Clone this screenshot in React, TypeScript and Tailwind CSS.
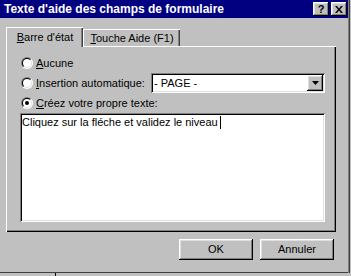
import React from "react";

const raised =
  "shadow-[inset_-1px_-1px_#000,inset_1px_1px_#fff,inset_-2px_-2px_#808080,inset_2px_2px_#dfdfdf]";
const sunken =
  "shadow-[inset_1px_1px_#808080,inset_-1px_-1px_#fff,inset_2px_2px_#000,inset_-2px_-2px_#dfdfdf]";

function Radio({ checked }: { checked?: boolean }) {
  return (
    <svg width="12" height="12" viewBox="0 0 12 12" className="shrink-0">
      <defs>
        <linearGradient id="ro" x1="0" y1="0" x2="1" y2="1">
          <stop offset="0.5" stopColor="#808080" />
          <stop offset="0.5" stopColor="#ffffff" />
        </linearGradient>
        <linearGradient id="ri" x1="0" y1="0" x2="1" y2="1">
          <stop offset="0.5" stopColor="#000000" />
          <stop offset="0.5" stopColor="#dfdfdf" />
        </linearGradient>
      </defs>
      <circle cx="6" cy="6" r="6" fill="url(#ro)" />
      <circle cx="6" cy="6" r="5" fill="url(#ri)" />
      <circle cx="6" cy="6" r="4" fill="#fff" />
      {checked && <circle cx="6" cy="6" r="2" fill="#000" />}
    </svg>
  );
}

export default function App() {
  return (
    <div
      className="relative flex h-[276px] w-[351px] flex-col overflow-hidden bg-[#c0c0c0] text-[11px] text-black"
      style={{ fontFamily: '"Liberation Sans", Arial, sans-serif' }}
    >
      {/* title bar */}
      <div className="flex h-[18px] w-[348px] shrink-0 items-center bg-[#000080] pl-[4px] pr-[1px]">
        <span className="flex-1 text-[12px] font-bold leading-none text-white">
          Texte d'aide des champs de formulaire
        </span>
        <div className={`flex h-[14px] w-[16px] items-center justify-center bg-[#c0c0c0] text-[11px] font-bold leading-none ${raised}`}>
          ?
        </div>
        <div className={`ml-[2px] flex h-[14px] w-[16px] items-center justify-center bg-[#c0c0c0] ${raised}`}>
          <svg width="8" height="7" viewBox="0 0 8 7">
            <path d="M0 0h2l2 2.5L6 0h2L5 3.5 8 7H6L4 4.5 2 7H0l3-3.5z" fill="#000" />
          </svg>
        </div>
      </div>

      {/* tabs */}
      <div className="mt-[9px] flex items-end pl-[6px]">
        <div className="relative z-10 -mb-px flex h-[20px] w-[77px] items-center justify-center border-t border-l border-white bg-[#c0c0c0] shadow-[inset_-1px_0_#404040,inset_-2px_0_#808080]">
          <span>
            <span className="underline">B</span>arre d'état
          </span>
        </div>
        <div className="flex h-[17px] w-[97px] items-center justify-center border-t border-l border-white bg-[#c0c0c0] shadow-[inset_-1px_0_#404040,inset_-2px_0_#808080]">
          <span>
            <span className="underline">T</span>ouche Aide (F1)
          </span>
        </div>
      </div>

      {/* panel */}
      <div className="ml-[6px] flex h-[186px] w-[330px] flex-col pt-[7px] pl-[14px] shadow-[inset_1px_1px_#fff,inset_-1px_-1px_#000,inset_-2px_-2px_#808080]">
        <div className="flex h-[20px] items-center pl-[1px]">
          <Radio />
          <span className="ml-[3px]">
            <span className="underline">A</span>ucune
          </span>
        </div>
        <div className="flex h-[20px] items-center pl-[1px]">
          <Radio />
          <span className="ml-[3px] w-[115px]">
            <span className="underline">I</span>nsertion automatique:
          </span>
          <div className={`flex h-[20px] w-[174px] items-center bg-white pl-[3px] pr-[2px] ${sunken}`}>
            <span className="flex-1">- PAGE -</span>
            <div className={`flex h-[16px] w-[16px] items-center justify-center bg-[#c0c0c0] ${raised}`}>
              <svg width="7" height="4" viewBox="0 0 7 4">
                <path d="M0 0h7L3.5 4z" fill="#000" />
              </svg>
            </div>
          </div>
        </div>
        <div className="flex h-[20px] items-center pl-[1px]">
          <Radio checked />
          <span className="ml-[3px]">
            <span className="underline">C</span>réez votre propre texte:
          </span>
        </div>
        <div className={`h-[109px] w-[305px] bg-white px-[2px] pt-[3px] ${sunken}`}>
          <div className="flex items-center leading-[13px]">
            <span>Cliquez sur la fléche et validez le niveau</span>
            <span className="ml-[2px] h-[13px] w-px bg-black" />
          </div>
        </div>
      </div>

      {/* buttons */}
      <div className="mt-[7px] flex gap-[7px] pl-[179px]">
        <div className={`flex h-[21px] w-[74px] items-center justify-center bg-[#c0c0c0] ${raised}`}>OK</div>
        <div className={`flex h-[21px] w-[74px] items-center justify-center bg-[#c0c0c0] ${raised}`}>Annuler</div>
      </div>

      {/* window bottom edge */}
      <div className="mt-[12px] h-px w-[349px] bg-[#404040]" />
      <div className="ml-[55px] h-[3px] w-px bg-black" />

      {/* window right edge */}
      <div className="absolute top-0 right-0 h-[273px] w-[3px] border-l border-[#808080] border-r border-r-[#c0c0c0] bg-[#404040]" />
    </div>
  );
}
